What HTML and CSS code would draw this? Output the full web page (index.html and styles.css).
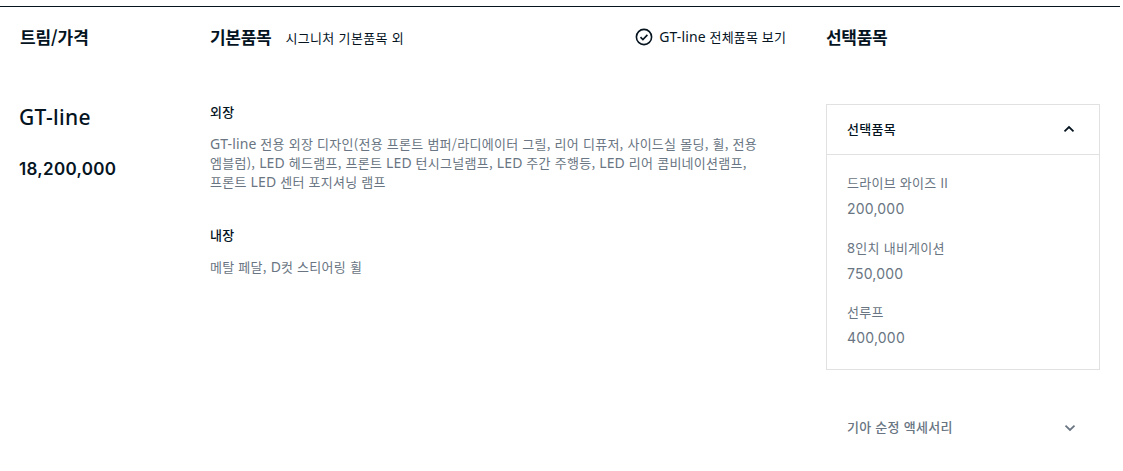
FILE: index.html
```html
<!DOCTYPE html>
<html lang="ko">
<head>
<meta charset="utf-8">
<title>GT-line</title>
<link rel="stylesheet" href="styles.css">
</head>
<body>
<main class="trim">
  <header class="row head">
    <h2 class="title first">트림/가격</h2>
    <div class="head-items">
      <h2 class="title">기본품목</h2>
      <span class="sub">시그니처 기본품목 외</span>
      <a class="view-all">
        <svg class="check" viewBox="0 0 18 18"><circle cx="9" cy="9" r="7.6"/><path d="M5.5 9.2l2.4 2.3 4.5-4.6"/></svg>
        <span class="view-text"><span class="latin">GT-line</span> 전체품목 보기</span>
      </a>
    </div>
    <h2 class="title">선택품목</h2>
  </header>
  <div class="row body">
    <div class="model">
      <h3 class="name">GT-line</h3>
      <p class="price">18,200,000</p>
    </div>
    <div class="specs">
      <section class="spec">
        <h4 class="spec-title">외장</h4>
        <p class="desc"><span class="latin">GT-line</span> 전용 외장 디자인(전용 프론트 범퍼/라디에이터 그릴, 리어 디퓨저, 사이드실 몰딩, 휠, 전용<br>엠블럼), <span class="latin">LED</span> 헤드램프, 프론트 <span class="latin">LED</span> 턴시그널램프, <span class="latin">LED</span> 주간 주행등, <span class="latin">LED</span> 리어 콤비네이션램프,<br>프론트 <span class="latin">LED</span> 센터 포지셔닝 램프</p>
      </section>
      <section class="spec">
        <h4 class="spec-title">내장</h4>
        <p class="desc">메탈 페달, <span class="latin">D</span>컷 스티어링 휠</p>
      </section>
    </div>
    <div class="options">
      <section class="panel">
        <h4 class="panel-head"><span class="panel-title">선택품목</span><svg class="arrow" viewBox="0 0 12 8"><path d="M1.5 6.3L6 2l4.5 4.3"/></svg></h4>
        <ul class="list">
          <li><span class="option">드라이브 와이즈 <span class="numeral">II</span></span><span class="cost">200,000</span></li>
          <li><span class="option"><span class="latin">8</span>인치 내비게이션</span><span class="cost">750,000</span></li>
          <li><span class="option">선루프</span><span class="cost">400,000</span></li>
        </ul>
      </section>
      <h4 class="panel-head closed"><span class="panel-title">기아 순정 액세서리</span><svg class="arrow" viewBox="0 0 12 8"><path d="M1.5 1.7L6 6l4.5-4.3"/></svg></h4>
    </div>
  </div>
</main>
</body>
</html>
```
FILE: styles.css
```css
* { box-sizing: border-box; margin: 0; padding: 0; }
body { background: #fff; color: #05141f; font-family: "Noto Sans CJK KR", sans-serif; font-size: 13px; letter-spacing: 0.27px; overflow: hidden; }
.trim { width: 1120px; margin-top: 6px; border-top: 1px solid #05141f; }
.row { display: grid; grid-template-columns: 190px 616px 274px; padding-left: 20px; }
.head { height: 60px; align-items: center; }
.title { font-size: 17px; font-weight: 700; line-height: 24px; letter-spacing: -0.3px; white-space: nowrap; }
.first { letter-spacing: -0.1px; }
.head-items { display: flex; align-items: center; padding-right: 40px; }
.sub { margin-left: 14px; padding-top: 2px; line-height: 20px; letter-spacing: 0.35px; }
.view-all { display: flex; align-items: center; gap: 6px; margin-left: auto; line-height: 20px; letter-spacing: 0.14px; white-space: nowrap; }
.check { width: 18px; height: 18px; fill: none; stroke: #05141f; stroke-width: 1.6; }
.latin { font-family: "Noto Sans", sans-serif; font-size: 14px; }
.desc .latin { letter-spacing: 0.1px; }
.numeral { font-family: Inter, sans-serif; }
.body { padding-top: 37px; }
.name { margin: -1px 0 0 -1px; font: 500 21px/28px "Noto Sans", sans-serif; letter-spacing: 0.35px; }
.price { margin: 25px 0 0 -1px; font: 600 17px/26px Inter, sans-serif; letter-spacing: 0.3px; }
.spec { margin-bottom: 35px; }
.specs { margin-top: -1px; }
.spec-title { font-size: 13px; font-weight: 500; line-height: 18px; margin-bottom: 13px; }
.desc { color: #697582; line-height: 19px; white-space: nowrap; }
.panel { height: 266px; border: 1px solid #e1e1e1; }
.panel-head { display: flex; align-items: center; justify-content: space-between; height: 50px; padding: 0 24px 2px 20px; border-bottom: 1px solid #e1e1e1; font-size: 13px; font-weight: 500; }
.arrow { width: 12px; height: 8px; fill: none; stroke: currentColor; stroke-width: 1.8; }
.closed { margin-top: 33px; border: 0; color: #697582; padding-left: 21px; }
.closed .panel-title { padding-bottom: 2px; }
.closed .arrow { margin-top: 2px; }
.list { list-style: none; padding: 18px 20px; }
.list li { display: flex; flex-direction: column; gap: 6px; margin-bottom: 18.5px; color: #697582; }
.option, .cost { height: 20px; line-height: 20px; }
.cost { font-family: Inter, sans-serif; font-size: 14px; letter-spacing: 0.2px; }
```
